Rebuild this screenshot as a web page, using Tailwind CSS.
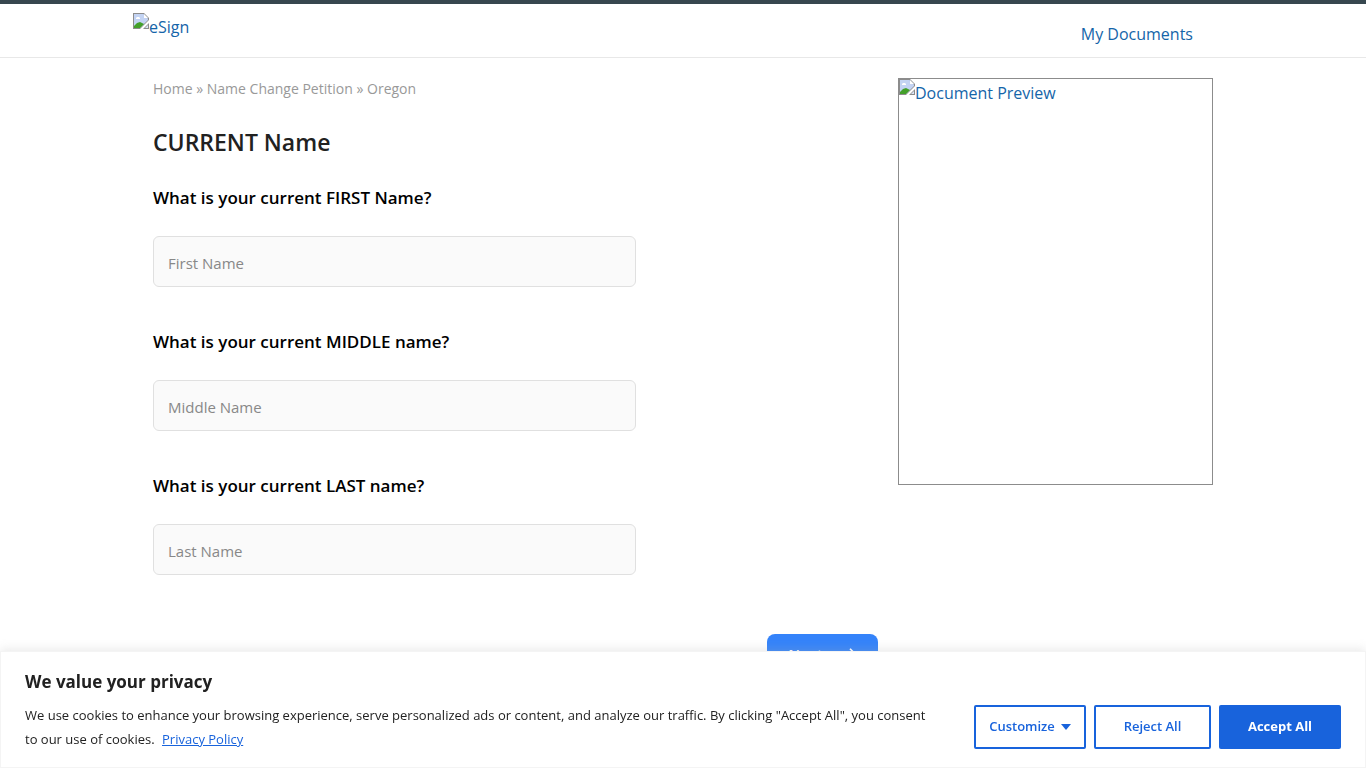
<!DOCTYPE html>
<html lang="en">
<head>
  <meta charset="UTF-8">
  <title>Name Change Petition - Oregon</title>
  <meta name="viewport" content="width=device-width, initial-scale=1.0">
  <script src="https://cdn.jsdelivr.net/npm/@tailwindcss/browser@4"></script>
</head>
<body class="bg-white font-['Segoe_UI','Open_Sans',sans-serif] text-[#212121]">

  <header class="border-t-4 border-t-[#37474f] border-b border-b-[#e8e8e8]">
    <div class="max-w-[1100px] mx-auto h-[53px] flex justify-between items-start">
      <a href="#" class="flex items-start pt-[9px] text-base text-[#1565a9]">
        <svg class="w-4 h-4 shrink-0" viewBox="0 0 16 16" aria-hidden="true">
          <path d="M0 0H11L16 5V7L7 16H0Z" fill="#8c8c8c"/>
          <path d="M1 1H10.500L15 5.500V7L7 15H1Z" fill="#c3d3f3"/>
          <path d="M11 1V5H15Z" fill="#fff"/>
          <path d="M3 6V5L4 4H6L7 5V6Z" fill="#fff"/>
          <path d="M1 15V13L4 10L7 9L11 11L7 15Z" fill="#43a02a"/>
          <path d="M16 10V16H10Z" fill="#8c8c8c"/>
          <path d="M15 12V15H12Z" fill="#dbe5f7"/>
        </svg>
        <span class="leading-7">eSign</span>
      </a>
      <nav class="pt-4 pr-10">
        <a href="#" class="text-base leading-7 text-[#1565a9]">My Documents</a>
      </nav>
    </div>
  </header>

  <div class="max-w-[1100px] mx-auto px-5 pt-5 flex gap-5">
    <main class="flex-1">
      <nav class="text-sm leading-[22px] text-[#999]">
        <a href="#">Home</a> » <a href="#">Name Change Petition</a> » <a href="#">Oregon</a>
      </nav>
      <h1 class="mt-[26px] text-[23px] leading-8 font-semibold">CURRENT Name</h1>

      <form class="mt-7">
        <div class="w-2/3 flex flex-col gap-[43px]">
          <div>
            <label for="first" class="block text-[17px] leading-6 font-semibold text-black">What is your current FIRST Name?</label>
            <input id="first" type="text" placeholder="First Name" class="mt-[26px] block w-full h-[51px] px-3.5 pt-0.5 rounded-md border border-[#e0e0e0] bg-[#fafafa] text-[15px] placeholder:text-[#888]">
          </div>
          <div>
            <label for="middle" class="block text-[17px] leading-6 font-semibold text-black">What is your current MIDDLE name?</label>
            <input id="middle" type="text" placeholder="Middle Name" class="mt-[26px] block w-full h-[51px] px-3.5 pt-0.5 rounded-md border border-[#e0e0e0] bg-[#fafafa] text-[15px] placeholder:text-[#888]">
          </div>
          <div>
            <label for="last" class="block text-[17px] leading-6 font-semibold text-black">What is your current LAST name?</label>
            <input id="last" type="text" placeholder="Last Name" class="mt-[26px] block w-full h-[51px] px-3.5 pt-0.5 rounded-md border border-[#e0e0e0] bg-[#fafafa] text-[15px] placeholder:text-[#888]">
          </div>
        </div>
        <div class="mt-[59px] flex justify-end">
          <button type="button" class="w-[111px] h-10 flex items-center justify-center gap-5 rounded-lg bg-[#3483fa] text-[15px] text-white font-semibold">
            Next
            <svg class="w-3.5 h-3.5" viewBox="0 0 16 16" fill="none" stroke="currentColor" stroke-width="2"><path d="M1 8h13M8 2l6 6-6 6"/></svg>
          </button>
        </div>
      </form>
    </main>

    <aside class="w-[315px] shrink-0">
      <a href="#" class="flex items-start h-[407px] border border-[#8c8c8c] text-base text-[#1565a9]">
        <svg class="w-4 h-4 shrink-0" viewBox="0 0 16 16" aria-hidden="true">
          <path d="M0 0H11L16 5V7L7 16H0Z" fill="#8c8c8c"/>
          <path d="M1 1H10.500L15 5.500V7L7 15H1Z" fill="#c3d3f3"/>
          <path d="M11 1V5H15Z" fill="#fff"/>
          <path d="M3 6V5L4 4H6L7 5V6Z" fill="#fff"/>
          <path d="M1 15V13L4 10L7 9L11 11L7 15Z" fill="#43a02a"/>
          <path d="M16 10V16H10Z" fill="#8c8c8c"/>
          <path d="M15 12V15H12Z" fill="#dbe5f7"/>
        </svg>
        <span class="leading-7">Document Preview</span>
      </a>
    </aside>
  </div>

  <!-- cookie notice -->
  <section class="fixed bottom-0 inset-x-0 bg-white border border-[#f4f4f4] shadow-[0_-1px_10px_0_#acabab4d] px-6 py-4">
    <h2 class="text-[17px] leading-7 font-bold">We value your privacy</h2>
    <div class="mt-[7px] flex items-center gap-10">
      <p class="flex-1 text-[13px] leading-6"><span>We use cookies to enhance your browsing experience, serve personalized ads or content, and analyze our traffic. By clicking "Accept All", you consent to our use of cookies.</span> <a href="#" class="ml-1 text-[#1863dc] underline">Privacy Policy</a></p>
      <div class="flex gap-2 text-[13px] font-semibold">
        <button type="button" class="w-28 h-11 flex items-center justify-center gap-1.5 rounded-xs border-2 border-[#1863dc] text-[#1863dc]">
          Customize
          <svg class="w-2.5 h-1.5" viewBox="0 0 10 6" fill="currentColor"><path d="M0 0h10L5 6z"/></svg>
        </button>
        <button type="button" class="w-[117px] h-11 rounded-xs border-2 border-[#1863dc] text-[#1863dc]">Reject All</button>
        <button type="button" class="w-[122px] h-11 rounded-xs bg-[#1863dc] text-white font-bold">Accept All</button>
      </div>
    </div>
  </section>

</body>
</html>
